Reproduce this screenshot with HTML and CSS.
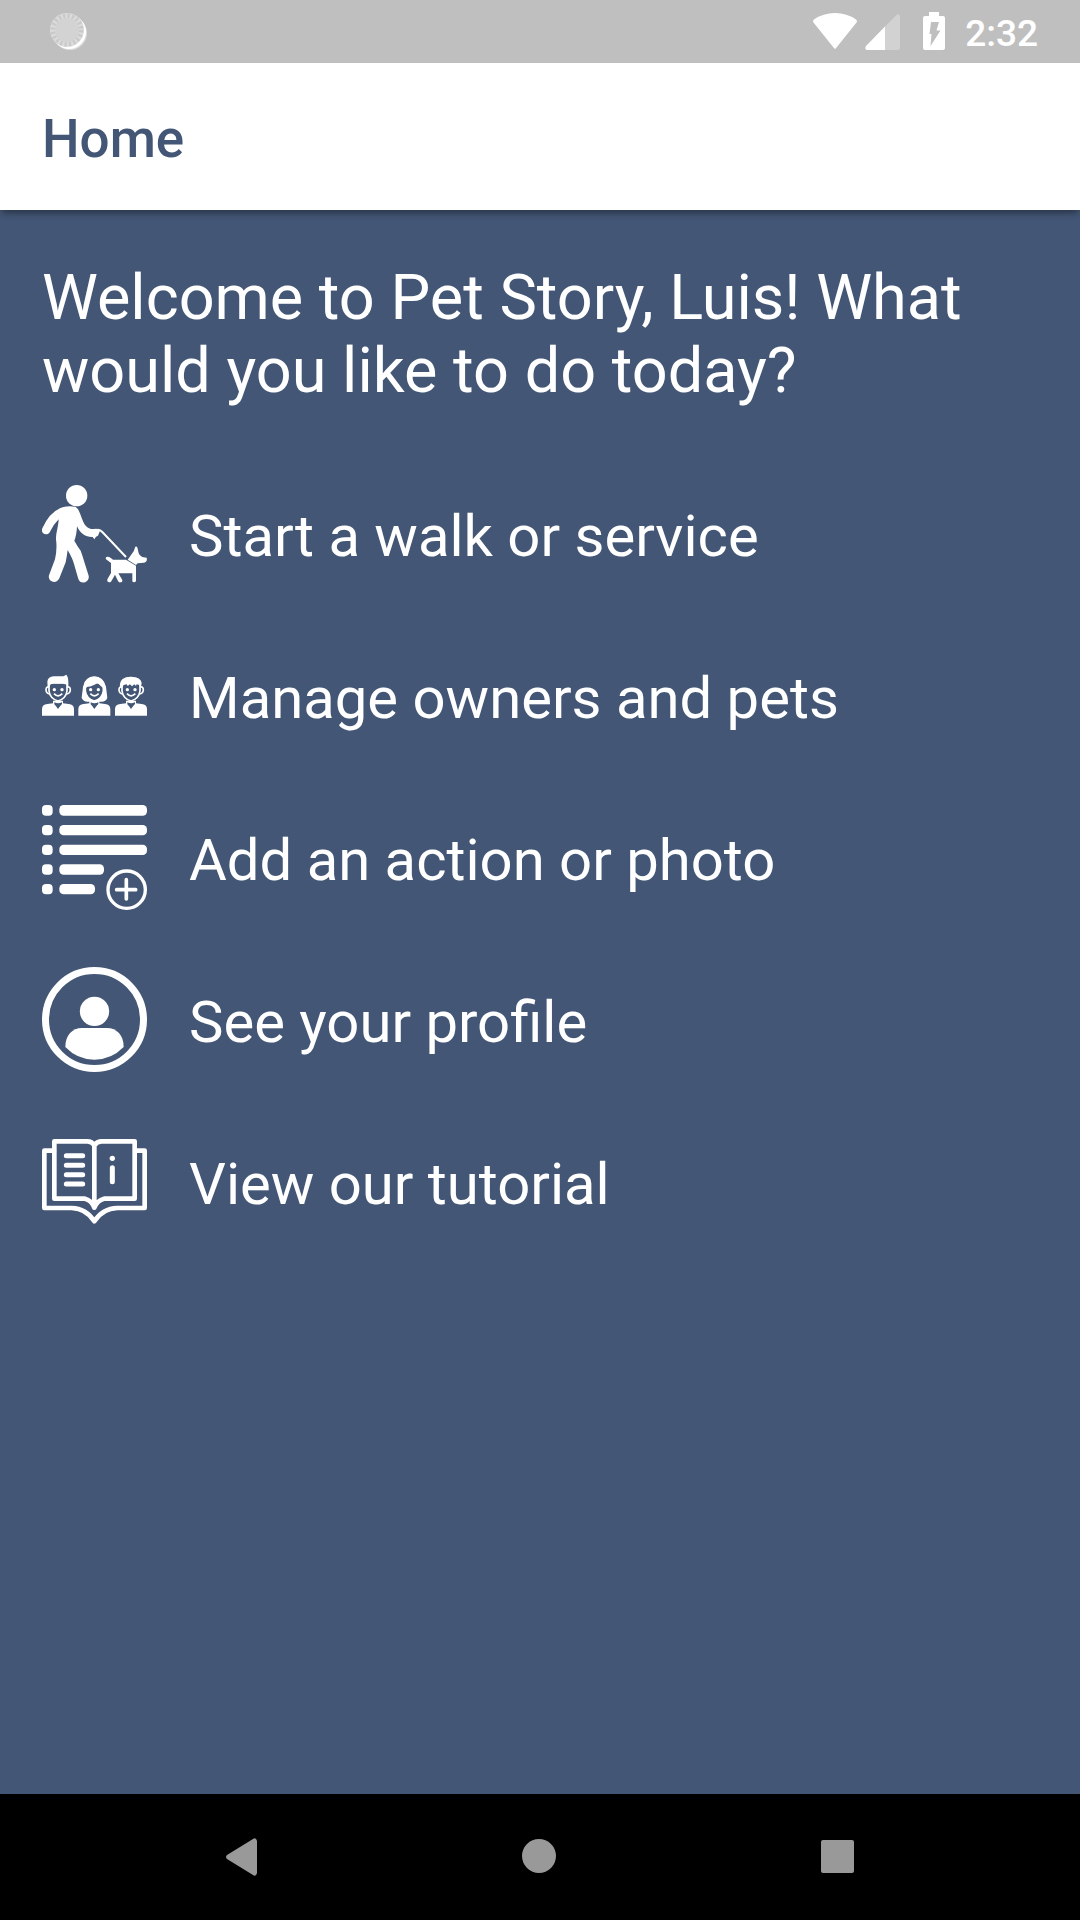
FILE: index.html
```html
<!DOCTYPE html>
<html lang="en">
<head>
<meta charset="utf-8">
<meta name="viewport" content="width=device-width, initial-scale=1">
<title>Pet Story</title>
<link rel="stylesheet" href="styles.css">
</head>
<body>
<div class="screen">
  <div class="status">
    <svg class="status-sync" viewBox="0 0 38 38" aria-hidden="true">
      <circle cx="20" cy="20" r="17" fill="#dedede"/>
      <circle cx="19" cy="19" r="17" fill="#fff"/>
      <circle cx="17" cy="17" r="17" fill="#dcdcdc"/>
      <circle cx="17" cy="17" r="14" fill="none" stroke="#cacaca" stroke-width="5" stroke-dasharray="2.400 2"/>
      <circle cx="17" cy="17" r="12" fill="#d3d3d3"/>
    </svg>
    <div class="status-right">
      <svg class="status-icons" viewBox="0 0 134 40" aria-hidden="true">
        <path d="M1.500 10.500Q0 9 2 7.500Q11 1 23 1T44 7.500Q46 9 44.500 10.500L24.500 35.500Q23 38 21.500 35.500Z" fill="#fff"/>
        <path d="M73 37V14.500L84.500 3Q88 1 88 4.500V35Q88 38 85.500 38H73Z" fill="#d2d2d2"/>
        <path d="M73 14.500V38H55Q52 37 54 34Z" fill="#fff"/>
        <path d="M117 0h10v4h4q2 0 2 2v30q0 2-2 2h-18q-2 0-2-2V6q0-2 2-2h4Z" fill="#fff"/>
        <path d="M119 10H127L124.500 18.500H128.500L118.500 34L119.500 22H117.500Z" fill="#bfbfbf"/>
      </svg>
      <span class="clock">2:32</span>
    </div>
  </div>
  <header class="appbar"><h1 class="title">Home</h1></header>
  <main class="content">
    <h2 class="welcome">Welcome to Pet Story, Luis! What would you like to do today?</h2>
    <nav class="menu">
      <a class="item" href="#walk">
        <svg class="icon" viewBox="36 32 315 315" aria-hidden="true" fill="#fff">
          <circle cx="140" cy="76" r="32"/>
          <path d="M86 147Q69 164 60 184C52 199 30 190 37 174Q60 122 100 110Q120 105 137 110C151 118 154 150 167 166Q177 177 192 176Q202 174 211 179L204 196L198 199L193 207L188 200C168 201 151 190 141 168Q140 194 133 211Q141 226 152 241Q158 257 163 275L176 316C180 336 151 345 145 326L132 281Q127 263 113 239Q111 256 107 276L88 324C80 343 52 335 57 315L75 267Q82 237 78 207C78 185 85 170 86 147Z"/>
          <path d="M204 178Q211 178 217 185L288 260" fill="none" stroke="#fff" stroke-width="6"/>
          <path d="M293 268L311 243L316 229Q322 227 323 235L326 249Q332 260 341 261L350 262Q353 274 342 277L323 279L318 284Z"/>
          <path d="M228 267Q225 259 233 259Q238 258 249 268H288L318 286V331Q317 336 312 336Q307 336 307 331V309H265L277 329Q278 336 271 336Q267 337 264 332L255 313L243 334Q237 338 232 333V327L243 308V278Z"/>
        </svg>
        <span class="label">Start a walk or service</span>
      </a>
      <a class="item" href="#owners">
        <svg class="icon" viewBox="36 -50 315 315" aria-hidden="true" fill="#fff">
          <defs>
            <g id="bust">
              <path d="M0 168V149Q0 134 16 133L33 131V123H63V131L80 133Q96 134 96 149V168Z"/>
              <path d="M37 128Q48 134 60 128V133Q54 139 48 148Q42 139 37 134Z" fill="#435675"/>
            </g>
            <g id="face">
              <path d="M21 72Q48 66 75 72V94Q72 117 48 124Q24 117 21 94Z" fill="#435675" stroke="#fff" stroke-width="5"/>
              <circle cx="37" cy="90" r="5"/><circle cx="60" cy="90" r="5"/>
              <path d="M36 102Q48 115 61 102" fill="none" stroke="#fff" stroke-width="5"/>
            </g>
          </defs>
          <g transform="translate(36 0)">
            <use href="#bust"/>
            <path d="M22 82Q12 80 12 91Q13 102 23 103M75 82Q85 80 85 91Q84 102 74 103" fill="none" stroke="#fff" stroke-width="5"/>
            <use href="#face"/>
            <path d="M17 83L16 66Q18 51 35 50H64L73 45L77 52Q80 62 79 83L73 74L69 70Q48 75 28 70L23 79Z"/>
          </g>
          <g transform="translate(145 0)">
            <path d="M48 50Q75 51 83 81L87 115Q83 126 69 126H27Q15 126 10 115L14 81Q21 51 48 50Z"/>
            <use href="#bust"/>
            <use href="#face"/>
            <path d="M19 87V67Q32 50 48 51Q66 51 77 68V87L68 80L57 69Q44 80 28 81Z"/>
          </g>
          <g transform="translate(255 0)">
            <use href="#bust"/>
            <path d="M22 82Q12 80 12 91Q13 102 23 103M75 82Q85 80 85 91Q84 102 74 103" fill="none" stroke="#fff" stroke-width="5"/>
            <use href="#face"/>
            <path d="M15 83Q13 66 23 58Q33 50 49 51Q78 52 80 70L78 83L72 75L65 74L63 79L58 74L51 80L45 74L38 79L35 74L26 76L22 83Z"/>
          </g>
        </svg>
        <span class="label">Manage owners and pets</span>
      </a>
      <a class="item" href="#action">
        <svg class="icon" viewBox="36 44 315 315" aria-hidden="true" fill="#fff">
          <rect x="36" y="44" width="32" height="32" rx="12"/><rect x="88" y="44" width="263" height="32" rx="13"/>
          <rect x="36" y="104" width="32" height="31" rx="12"/><rect x="88" y="104" width="263" height="31" rx="13"/>
          <rect x="36" y="163" width="32" height="31" rx="12"/><rect x="88" y="163" width="263" height="31" rx="13"/>
          <rect x="36" y="222" width="32" height="31" rx="12"/><rect x="88" y="222" width="134" height="31" rx="13"/>
          <rect x="36" y="281" width="32" height="31" rx="12"/><rect x="88" y="281" width="107" height="31" rx="13"/>
          <circle cx="290" cy="298" r="56" fill="none" stroke="#fff" stroke-width="10"/>
          <path d="M289 268V326M260 298H317" fill="none" stroke="#fff" stroke-width="11" stroke-linecap="round"/>
        </svg>
        <span class="label">Add an action or photo</span>
      </a>
      <a class="item" href="#profile">
        <svg class="icon" viewBox="36 36 315 315" aria-hidden="true" fill="#fff">
          <circle cx="193.500" cy="193.500" r="147" fill="none" stroke="#fff" stroke-width="21"/>
          <circle cx="193.500" cy="169" r="44"/>
          <path d="M106 276C106 241 127 219 156 219H231C260 219 281 241 281 276Q244 314 193 314T106 276Z"/>
        </svg>
        <span class="label">See your profile</span>
      </a>
      <a class="item" href="#tutorial">
        <svg class="icon" viewBox="36 26 315 315" aria-hidden="true" fill="none" stroke="#fff" stroke-width="14" stroke-linejoin="round" stroke-linecap="round">
          <path d="M193 75Q186 63 172 63H73V235H165Q185 240 193 262Q202 240 222 235H314V63H215Q201 63 193 75V262"/>
          <path d="M72 91H43V263H125Q168 264 193 303Q218 264 262 263H344V91H316"/>
          <path d="M109 106H158M109 135H158M109 163H158M109 191H158M247 142V184" stroke-width="15"/>
          <circle cx="247" cy="114" r="8" fill="#fff" stroke="none"/>
        </svg>
        <span class="label">View our tutorial</span>
      </a>
    </nav>
  </main>
  <div class="navbar">
    <button class="nav-button" aria-label="Back"><svg class="nav-icon" viewBox="0 0 48 48"><path d="M39 8V40Q38 44 35 42L9 26Q7 24 9 22L35 6Q38 4 39 8Z" fill="#999"/></svg></button>
    <button class="nav-button" aria-label="Home"><svg class="nav-icon" viewBox="0 0 48 48"><circle cx="23" cy="23" r="17" fill="#999"/></svg></button>
    <button class="nav-button" aria-label="Recent apps"><svg class="nav-icon" viewBox="0 0 48 48"><rect x="7" y="7" width="33" height="33" rx="2" fill="#999"/></svg></button>
  </div>
</div>
</body>
</html>
```
FILE: styles.css
```css
* {
  box-sizing: border-box;
}

body {
  margin: 0;
  background: #435675;
  font-family: Roboto, "Liberation Sans", sans-serif;
}

.screen {
  display: flex;
  flex-direction: column;
  min-height: 100vh;
}

.status {
  display: flex;
  align-items: center;
  justify-content: space-between;
  height: 63px;
  padding: 0 42px 0 50px;
  background: #bfbfbf;
}

.status-sync {
  width: 38px;
  height: 38px;
}

.status-right {
  display: flex;
  align-items: center;
  gap: 19px;
}

.status-icons {
  width: 134px;
  height: 40px;
}

.clock {
  padding-top: 4px;
  color: #fff;
  font-size: 37px;
  font-weight: 500;
  line-height: 59px;
}

.appbar {
  display: flex;
  align-items: center;
  height: 147px;
  padding: 4px 42px 0;
  background: #fff;
  box-shadow: 0 5px 7px -2px rgba(0, 0, 0, 0.4);
}

.title {
  margin: 0;
  color: #435675;
  font-size: 53px;
  font-weight: 500;
}

.content {
  flex: 1;
  padding: 51px 42px;
}

.welcome {
  margin: 0 0 48px;
  color: #fff;
  font-size: 63px;
  font-weight: 400;
  line-height: 73px;
}

.menu {
  display: flex;
  flex-direction: column;
}

.item {
  display: flex;
  align-items: center;
  gap: 42px;
  height: 162px;
  color: #fff;
  text-decoration: none;
}

.icon {
  flex: none;
  width: 105px;
  height: 105px;
  margin-bottom: 6px;
}

.label {
  font-size: 58px;
}

.navbar {
  display: flex;
  justify-content: center;
  height: 126px;
  background: #000;
}

.nav-button {
  display: flex;
  align-items: center;
  justify-content: center;
  width: 298px;
  padding: 0;
  border: 0;
  background: none;
}

.nav-icon {
  width: 48px;
  height: 48px;
}
```
